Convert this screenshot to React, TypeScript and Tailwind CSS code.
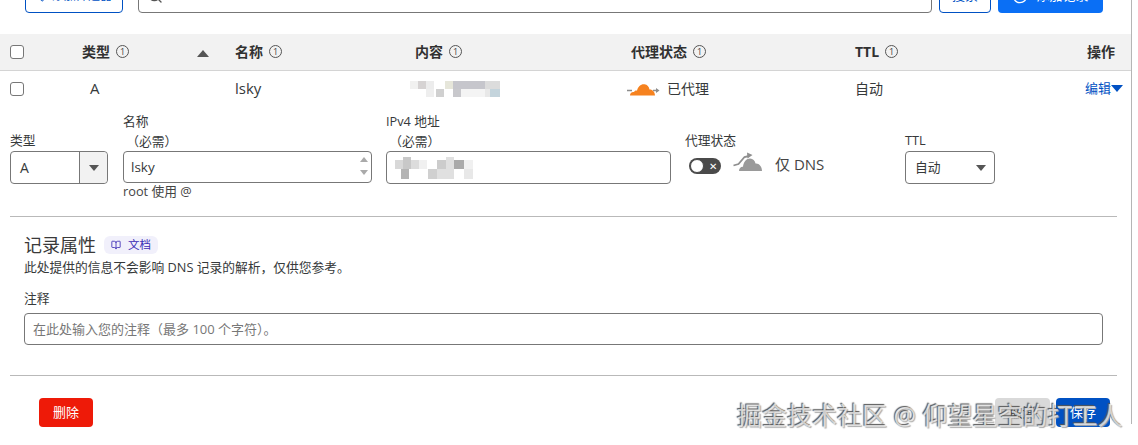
import { Search, CirclePlus, Filter, BookOpen } from "lucide-react";

const FONT = "font-['Open_Sans','Noto_Sans_CJK_SC',sans-serif]";
const COLS = "grid grid-cols-[72px_153px_180px_216px_224px_1fr] items-center pl-[10px] pr-[16px]";

function Info() {
  return (
    <span className="ml-[6px] inline-flex h-[13px] w-[13px] items-center justify-center rounded-full border border-[#555] text-[9px] font-normal leading-none text-[#444]">
      1
    </span>
  );
}

function Check({ className = "" }: { className?: string }) {
  return <span className={`block h-[14px] w-[14px] rounded-[3px] border border-[#777] bg-white ${className}`} />;
}

function Caret({ className = "" }: { className?: string }) {
  return <span className={`block h-0 w-0 border-x-[5px] border-t-[6px] border-x-transparent border-t-[#555] ${className}`} />;
}

function OrangeCloud() {
  return (
    <svg width="33" height="16" viewBox="0 0 33 16" className="block">
      <path d="M0 9.500h5M26 9.500h5" stroke="#8d8d8d" strokeWidth="1.400" />
      <path d="M29 7l3.500 2.500-3.500 2.500z" fill="#8d8d8d" />
      <path d="M3 14.500c0-2.300 1.800-3.800 4-3.400.5-1.200 1.700-1.800 3-1.400C11 5.600 14 2.800 17.500 3.300c2.800.4 4.500 2.600 5 5.200 2.800-.3 5.300 2.300 5.500 6z" fill="#f6821f" />
    </svg>
  );
}

function GrayCloud() {
  return (
    <svg width="30" height="20" viewBox="0 0 30 20" className="block">
      <path d="M0.500 13.500l5-1.500 6-7 4.500-1" fill="none" stroke="#8f8f8f" strokeWidth="1.800" />
      <path d="M14 0.500l5.500 2.500-5 3.500z" fill="#8f8f8f" />
      <path d="M6 19c0-2.800 2-4.500 4-4.200C10.500 10 13.500 6.500 17 6.500c3 0 5 2.200 5.500 5 3.500-.4 6.500 3 6.500 7.500z" fill="#9a9a9a" />
    </svg>
  );
}

function MosaicRow() {
  const blocks: [number, number, number, string][] = [
    [0, 0, 8, "#f1f1f0"], [8, 0, 8, "#d6d3d3"], [16, 0, 8, "#ececec"], [35, 0, 8, "#e6e6da"],
    [43, 0, 32, "#c6c6cc"], [75, 0, 15, "#dcdcdc"], [16, 8, 8, "#eeeeee"], [26, 8, 8, "#d0d0d0"],
    [43, 8, 8, "#c8c8cc"], [51, 8, 24, "#f4f4f4"], [80, 8, 10, "#c4d4dc"], [75, 8, 5, "#e8e8e8"],
  ];
  return (
    <svg width="90" height="16" className="block blur-[0.4px]">
      {blocks.map(([x, y, w, c]) => <rect key={`${x}-${y}`} x={x} y={y} width={w} height="8" fill={c} />)}
    </svg>
  );
}

function MosaicInput() {
  const blocks: [number, number, number, number, string][] = [
    [8, 3, 8, 9, "#d8d8d8"], [16, 0, 8, 12, "#c8c8c8"], [24, 3, 8, 9, "#dcdcdc"], [32, 3, 8, 9, "#f0f0f0"],
    [50, 3, 9, 9, "#cccccc"], [59, 0, 8, 12, "#e0e0e0"], [67, 3, 10, 9, "#aaaaaa"], [77, 3, 9, 9, "#f0f0f0"],
    [14, 12, 8, 10, "#b4b4b4"], [41, 12, 9, 10, "#d0d0d0"], [50, 12, 17, 10, "#e0e0e0"], [77, 12, 9, 10, "#e8e8e8"],
  ];
  return (
    <svg width="90" height="22" className="block blur-[0.4px]">
      {blocks.map(([x, y, w, h, c]) => <rect key={`${x}-${y}`} x={x} y={y} width={w} height={h} fill={c} />)}
    </svg>
  );
}

export default function App() {
  return (
    <div className={`relative h-[445px] w-[1138px] overflow-hidden bg-white text-[13px] text-[#36393a] ${FONT}`}>
      <div className="h-[445px] w-[1132px] border-r border-[#b5b5b5]">
        {/* toolbar, cut off by the top of the shot */}
        <div className="-mt-[21px] flex h-[34px] items-stretch pl-[25px]">
          <button className="flex w-[98px] items-center justify-center gap-1 rounded-[4px] border border-[#0051c3] text-[12px] text-[#0051c3]">
            <Filter className="h-3 w-3" />添加筛选器
          </button>
          <div className="ml-[15px] flex w-[794px] items-center rounded-[4px] border border-[#777] pl-2">
            <Search className="h-4 w-4 text-[#555]" />
          </div>
          <button className="ml-[7px] w-[52px] rounded-[4px] border border-[#0051c3] text-[13px] text-[#0051c3]">搜索</button>
          <button className="ml-[7px] flex w-[105px] items-center justify-center gap-2 rounded-[4px] bg-[#0a6ff5] text-[13px] text-white">
            <CirclePlus className="h-4 w-4" />添加记录
          </button>
        </div>

        <div className={`${COLS} mt-[21px] h-[37px] border-b border-[#d4d4d4] bg-[#f2f2f2] pb-[2px] text-[14px] font-bold text-[#313131]`}>
          <Check className="mt-[2px]" />
          <div className="relative flex items-center">
            类型<Info />
            <span className="absolute left-[115px] top-[9px] block h-0 w-0 border-x-[6px] border-b-[7px] border-x-transparent border-b-[#555]" />
          </div>
          <div className="flex items-center">名称<Info /></div>
          <div className="flex items-center">内容<Info /></div>
          <div className="flex items-center">代理状态<Info /></div>
          <div className="flex items-center justify-between">
            <span className="flex items-center">TTL<Info /></span>
            <span>操作</span>
          </div>
        </div>

        <div className={`${COLS} h-[35px] !pr-[8px] text-[14px]`}>
          <Check />
          <div className="pl-[8px] text-[15px]">A</div>
          <div className="text-[15px]">lsky</div>
          <div className="-ml-[5px]"><MosaicRow /></div>
          <div className="-ml-[4px] flex items-center gap-[7px]"><OrangeCloud />已代理</div>
          <div className="flex items-center justify-between">
            <span>自动</span>
            <span className="flex items-center text-[13px] text-[#0051c3]">编辑<span className="block h-0 w-0 border-x-[6px] border-t-[7px] border-x-transparent border-t-[#0051c3]" /></span>
          </div>
        </div>

        <div className="flex pl-[10px] pt-[5px] text-[12.75px]">
          <div className="w-[113px]">
            <div className="flex h-[40px] items-end pb-[1px]">类型</div>
            <div className="flex h-[33px] w-[98px] rounded-[4px] border border-[#777]">
              <span className="flex flex-1 items-center pl-[9px] text-[14px]">A</span>
              <span className="flex w-[28px] items-center justify-center rounded-r-[4px] border-l border-[#777] bg-[#f2f2f2]"><Caret /></span>
            </div>
          </div>
          <div className="w-[263px]">
            <div className="h-[40px] leading-[20px]">名称<br />&nbsp;（必需）</div>
            <div className="relative w-[249px]">
              <input readOnly defaultValue="lsky" className="block h-[32px] w-full rounded-[4px] border border-[#777] pl-[7px] text-[13.5px] outline-none" />
              <span className="absolute right-[4px] top-[6px] flex flex-col gap-[8px]">
                <span className="block h-0 w-0 border-x-[4px] border-b-[5px] border-x-transparent border-b-[#aaa]" />
                <span className="block h-0 w-0 border-x-[4px] border-t-[5px] border-x-transparent border-t-[#aaa]" />
              </span>
            </div>
            <div className="leading-[17px] text-[#444]">root 使用 @</div>
          </div>
          <div className="w-[299px]">
            <div className="h-[40px] leading-[20px]">IPv4 地址<br />&nbsp;（必需）</div>
            <div className="flex h-[33px] w-[285px] items-center rounded-[4px] border border-[#777]"><MosaicInput /></div>
          </div>
          <div className="w-[220px]">
            <div className="flex h-[40px] items-end pb-[1px]">代理状态</div>
            <div className="flex items-start pl-[4px] pt-[1px]">
              <span className="mt-[6px] flex h-[16px] w-[32px] items-center justify-between rounded-full bg-[#4a4a4a] pl-[1px] pr-[4px]">
                <span className="block h-[14px] w-[14px] rounded-full border border-[#4a4a4a] bg-white" />
                <span className="text-[10px] leading-none text-white">✕</span>
              </span>
              <span className="ml-[12px]"><GrayCloud /></span>
              <span className="ml-[12px] text-[15px] leading-[24px] text-[#444]">仅 DNS</span>
            </div>
          </div>
          <div>
            <div className="flex h-[40px] items-end pb-[1px]">TTL</div>
            <div className="flex h-[33px] w-[90px] items-center justify-between rounded-[4px] border border-[#777] pl-[9px] pr-[8px]">
              自动<Caret />
            </div>
          </div>
        </div>

        <div className="ml-[10px] mr-[14px] mt-[16px] border-t border-[#b9b9b9]" />

        <div className="pl-[24px] pr-[28px] pt-[16px]">
          <div className="flex items-center gap-[8px]">
            <span className="text-[18px] leading-[24px] text-[#3a3a3a]">记录属性</span>
            <span className="flex h-[18px] w-[54px] items-center justify-center gap-[7px] rounded-[6px] bg-[#f1f0fb] text-[11.5px] text-[#3b2bb5]">
              <BookOpen className="h-[10px] w-[10px]" />文档
            </span>
          </div>
          <p className="text-[12.75px] leading-[20px]">此处提供的信息不会影响 DNS 记录的解析，仅供您参考。</p>
          <div className="mt-[11px] text-[12.75px] leading-[20px]">注释</div>
          <input
            readOnly
            placeholder="在此处输入您的注释（最多 100 个字符）。"
            className="mt-[5px] block h-[32px] w-full rounded-[4px] border border-[#777] pl-[8px] text-[13px] outline-none placeholder:text-[#777]"
          />
        </div>

        <div className="ml-[10px] mr-[14px] mt-[30px] border-t border-[#b9b9b9]" />

        <div className="flex pl-[39px] pr-[21px] pt-[22px] text-[13px]">
          <button className="h-[29px] w-[54px] rounded-[4px] bg-[#ee1a08] text-white">删除</button>
          <button className="ml-auto h-[29px] w-[55px] rounded-[4px] bg-[#d9d9d9] text-[#36393a]">取消</button>
          <button className="ml-[6px] h-[29px] w-[54px] rounded-[4px] bg-[#0051c3] text-white">保存</button>
        </div>
      </div>

      {/* site watermark lying over the buttons */}
      <div className="absolute left-[737px] top-[399px] whitespace-nowrap text-[25px] leading-[32px] text-[#eeeeee]/80 [text-shadow:-1px_-1px_1px_#555,1px_1px_1px_#aaa]">
        掘金技术社区 @ 仰望星空的打工人
      </div>
    </div>
  );
}
